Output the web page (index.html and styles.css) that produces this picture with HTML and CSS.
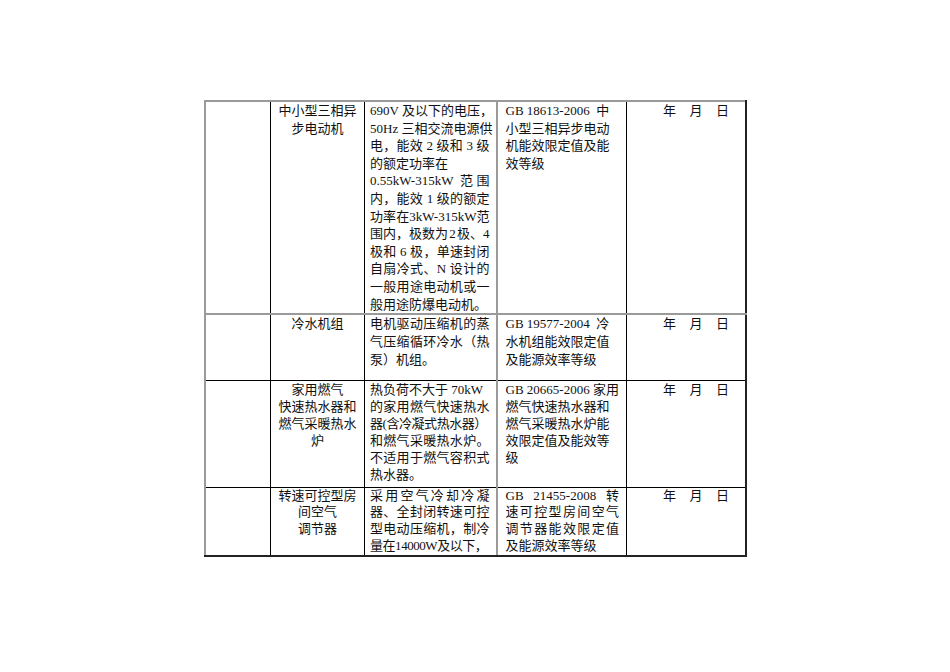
FILE: index.html
```html
<!DOCTYPE html>
<html lang="zh-CN">
<head>
<meta charset="utf-8">
<title>能效标准</title>
<link rel="stylesheet" href="styles.css">
</head>
<body>
<div class="page">
<table class="grid">
<colgroup><col class="w1"><col class="w2"><col class="w3"><col class="w4"><col class="w5"></colgroup>
<tr class="r1">
<td class="c1"></td>
<td class="c2"><span class="ln">中小型三相异</span><span class="ln">步电动机</span></td>
<td class="c3">
<span class="ln j">690V 及以下的电压，</span>
<span class="ln j">50Hz 三相交流电源供</span>
<span class="ln j">电，能效 2 级和 3 级</span>
<span class="ln">的额定功率在</span>
<span class="ln j">0.55kW-315kW 范围</span>
<span class="ln j">内，能效 1 级的额定</span>
<span class="ln j">功率在3kW-315kW范</span>
<span class="ln j tight">围内，极数为 2 极、4</span>
<span class="ln j">极和 6 极，单速封闭</span>
<span class="ln j">自扇冷式、N 设计的</span>
<span class="ln j">一般用途电动机或一</span>
<span class="ln">般用途防爆电动机。</span>
</td>
<td class="c4">
<span class="ln">GB 18613-2006&nbsp;&nbsp;中</span>
<span class="ln">小型三相异步电动</span>
<span class="ln">机能效限定值及能</span>
<span class="ln">效等级</span>
</td>
<td class="c5"><span class="ymd"><span>年</span><span>月</span><span>日</span></span></td>
</tr>
<tr class="r2">
<td class="c1"></td>
<td class="c2"><span class="ln">冷水机组</span></td>
<td class="c3">
<span class="ln j">电机驱动压缩机的蒸</span>
<span class="ln j">气压缩循环冷水（热</span>
<span class="ln">泵）机组。</span>
</td>
<td class="c4">
<span class="ln">GB 19577-2004&nbsp;&nbsp;冷</span>
<span class="ln">水机组能效限定值</span>
<span class="ln">及能源效率等级</span>
</td>
<td class="c5"><span class="ymd"><span>年</span><span>月</span><span>日</span></span></td>
</tr>
<tr class="r3">
<td class="c1"></td>
<td class="c2"><span class="ln">家用燃气</span><span class="ln">快速热水器和</span><span class="ln">燃气采暖热水</span><span class="ln">炉</span></td>
<td class="c3">
<span class="ln">热负荷不大于 70kW</span>
<span class="ln j">的家用燃气快速热水</span>
<span class="ln squeeze">器(含冷凝式热水器）</span>
<span class="ln j">和燃气采暖热水炉。</span>
<span class="ln j">不适用于燃气容积式</span>
<span class="ln">热水器。</span>
</td>
<td class="c4">
<span class="ln">GB 20665-2006 家用</span>
<span class="ln">燃气快速热水器和</span>
<span class="ln">燃气采暖热水炉能</span>
<span class="ln">效限定值及能效等</span>
<span class="ln">级</span>
</td>
<td class="c5"><span class="ymd"><span>年</span><span>月</span><span>日</span></span></td>
</tr>
<tr class="r4">
<td class="c1"></td>
<td class="c2"><span class="ln">转速可控型房</span><span class="ln">间空气</span><span class="ln">调节器</span></td>
<td class="c3">
<span class="ln j">采用空气冷却冷凝</span>
<span class="ln j">器、全封闭转速可控</span>
<span class="ln j">型电动压缩机，制冷</span>
<span class="ln squeeze">量在14000W及以下，</span>
</td>
<td class="c4">
<span class="ln j">GB 21455-2008 转</span>
<span class="ln j">速可控型房间空气</span>
<span class="ln j">调节器能效限定值</span>
<span class="ln">及能源效率等级</span>
</td>
<td class="c5"><span class="ymd"><span>年</span><span>月</span><span>日</span></span></td>
</tr>
</table>
</div>
</body>
</html>
```
FILE: styles.css
```css
html, body {
  margin: 0;
  background: #ffffff;
}
.page {
  padding-top: 100px;
}
.grid {
  border-collapse: collapse;
  table-layout: fixed;
  width: 541px;
  margin: 0 auto;
  font-family: "Liberation Serif", "Noto Sans CJK SC", serif;
  font-size: 13px;
  font-weight: 400;
  color: #111111;
}
.w1 { width: 66px; }
.w2 { width: 94px; }
.w3 { width: 132px; }
.w4 { width: 130px; }
.w5 { width: 119px; }
.grid td {
  border: 1px solid #000000;
  vertical-align: top;
  padding: 0;
}
.r1 { height: 211px; line-height: 17.6px; }
.r2 { height: 66px; line-height: 18px; }
.r3 { height: 107px; line-height: 17px; }
.r4 { height: 69px; line-height: 16.7px; }
.grid .r1 td { border-top: 2px solid #9a9a9a; border-bottom: 2px solid #9a9a9a; }
.grid .r4 td { border-bottom: 2px solid #222222; }
.grid td.c1 { border-left: 2px solid #9a9a9a; }
.grid td.c5 { border-right: 2px solid #222222; padding-left: 36px; }
.grid td.c3 { border-right: 2px solid #9a9a9a; padding: 0 6px 0 5px; }
.grid td.c4 { padding: 0 7px 0 8px; }
.grid td.c2 { text-align: center; }
.ln {
  display: block;
  white-space: nowrap;
}
.j {
  text-align: justify;
  text-align-last: justify;
}
.tight { word-spacing: -2px; }
.squeeze { letter-spacing: -0.45px; }
.ymd span { margin-right: 13.5px; }
.ymd span:last-child { margin-right: 0; }
```
